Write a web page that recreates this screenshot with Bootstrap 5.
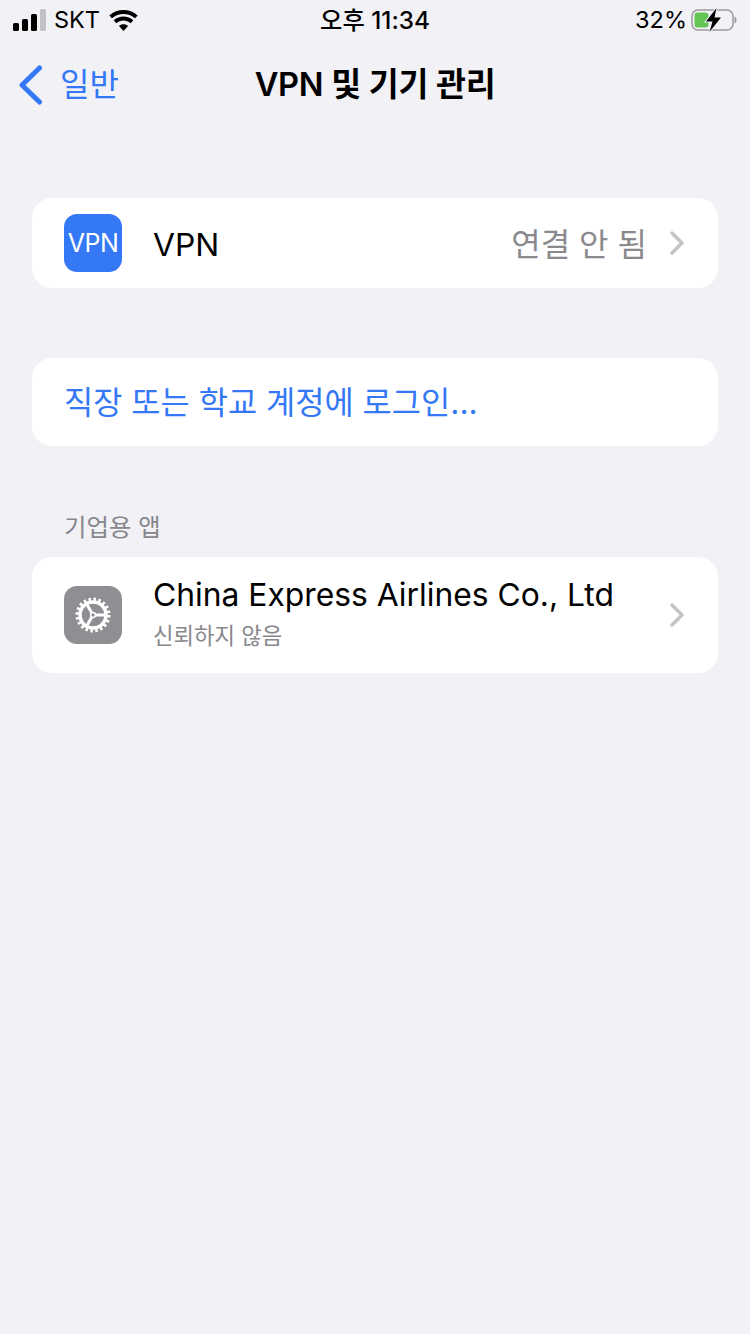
<!DOCTYPE html>
<html lang="ko">
<head>
    <meta charset="UTF-8">
    <title>VPN 및 기기 관리</title>
    <link rel="stylesheet" href="https://cdn.jsdelivr.net/npm/bootstrap@5.3.0/dist/css/bootstrap.min.css">
    <style>
        html, body { height: 100%; }
        body { background: #f1f1f6; color: #000; font-family: Inter, "Noto Sans CJK KR", sans-serif; width: 750px; height: 1334px; overflow: hidden; }
        .status-row { height: 40px; padding: 0 13px; font-size: 23.5px; line-height: 40px; }
        .status-side { width: 260px; }
        .status-time { font-size: 24.3px; font-weight: 500; }
        .title-row { height: 88px; padding: 1px 18px 0; }
        .back-link { color: #3478f6; font-size: 32px; width: 200px; text-decoration: none; }
        .back-link span { margin-left: 1px; }
        .title-spacer { width: 200px; }
        .page-title { font-size: 32.6px; font-weight: 600; letter-spacing: -.3px; }
        .group-box { background: #fff; border-radius: 20px; margin: 0 32px; padding: 0 32px; }
        .row-vpn { height: 90px; margin-top: 70px; }
        .row-login { height: 88px; margin-top: 70px; color: #3478f6; font-size: 31.75px; padding-top: 2px; }
        .row-app { height: 116px; }
        .section-label { color: #87878c; font-size: 24.4px; line-height: 30px; margin: 66px 64px 15px; }
        .app-tile { width: 58px; height: 58px; border-radius: 13px; flex: none; margin-right: 31px; }
        .tile-blue { background: #3478f6; color: #fff; font-size: 25px; letter-spacing: -.5px; padding-top: 2px; }
        .tile-gray { background: #8e8e93; }
        .wifi-icon { margin-left: 1px; }
        .row-name { font-size: 31.8px; line-height: 40px; }
        .row-vpn .row-name, .row-vpn .row-value { padding-top: 3px; }
        .app-text { padding-bottom: 5px; }
        .row-sub { color: #87878c; font-size: 22.3px; line-height: 28px; margin-top: 7px; }
        .row-value { color: #8a8a8e; font-size: 32px; margin-right: 22px; }
        .chevron-icon { margin-right: 1px; }
    </style>
</head>
<body>
    <div class="status-row d-flex justify-content-between align-items-center">
        <div class="status-side d-flex align-items-center gap-2">
            <svg width="33" height="22" viewBox="0 0 33 22"><rect x="0" y="14" width="6" height="8" rx="1.500"/><rect x="9" y="10" width="6" height="12" rx="1.500"/><rect x="18" y="5" width="6" height="17" rx="1.500"/><rect x="27" y="0" width="6" height="22" rx="1.500" fill="#c2c2c6"/></svg>
            <span>SKT</span>
            <svg class="wifi-icon" width="29" height="21" viewBox="0 0 31 23"><path d="M15.500 23l-5-5.600c2.800-2.400 7.200-2.400 10 0z"/><path d="M7.700 14.400l-2.900-3.200c6.100-5.300 15.300-5.300 21.400 0l-2.900 3.200c-4.500-3.800-11.100-3.800-15.600 0z"/><path d="M2.800 9L0 5.900c8.900-7.800 22.100-7.800 31 0L28.200 9C20.900 2.700 10.100 2.700 2.800 9z"/></svg>
        </div>
        <div class="status-time">오후 11:34</div>
        <div class="status-side d-flex align-items-center justify-content-end gap-1">
            <span>32%</span>
            <svg width="46" height="24" viewBox="0 0 46 24"><rect x="1" y="2" width="41" height="20" rx="6" fill="none" stroke="#9a9a9e" stroke-width="1.500"/><rect x="3.500" y="4.500" width="14" height="15" rx="3" fill="#62c554"/><path d="M43.500 8.500v7c1.300-.5 2-2 2-3.500s-.7-3-2-3.500z" fill="#9a9a9e"/><path d="M25.500 0L15 13.500h6.500L18.500 24 30 9.500h-6.500z" stroke="#f1f1f6" stroke-width="2" paint-order="stroke"/></svg>
        </div>
    </div>

    <div class="title-row d-flex align-items-center">
        <a class="back-link d-flex align-items-center gap-3" href="#">
            <svg width="25" height="40" viewBox="0 0 25 40"><path d="M21.500 3L4 20l17.500 17" fill="none" stroke="#3478f6" stroke-width="5" stroke-linecap="round" stroke-linejoin="round"/></svg>
            <span>일반</span>
        </a>
        <div class="page-title flex-grow-1 text-center">VPN 및 기기 관리</div>
        <div class="title-spacer"></div>
    </div>

    <div class="group-box row-vpn d-flex align-items-center">
        <div class="app-tile tile-blue d-flex align-items-center justify-content-center">VPN</div>
        <div class="row-name flex-grow-1">VPN</div>
        <div class="row-value">연결 안 됨</div>
        <svg class="chevron-icon" width="16" height="26" viewBox="0 0 16 26"><path d="M3 3l10 10L3 23" fill="none" stroke="#c4c4c8" stroke-width="3.500" stroke-linecap="round" stroke-linejoin="round"/></svg>
    </div>

    <div class="group-box row-login d-flex align-items-center">직장 또는 학교 계정에 로그인...</div>

    <div class="section-label">기업용 앱</div>

    <div class="group-box row-app d-flex align-items-center">
        <div class="app-tile tile-gray d-flex align-items-center justify-content-center">
            <svg width="36" height="36" viewBox="0 0 36 36" fill="none" stroke="#fff"><circle cx="18" cy="18" r="13" stroke-width="3.500"/><circle cx="18" cy="18" r="15.800" stroke-width="3.400" stroke-dasharray="2.500 2.460"/><path d="M18 18L31 18M18 18L11.500 6.700M18 18L11.500 29.300" stroke-width="3"/><circle cx="18" cy="18" r="2.400" fill="#8e8e93" stroke-width="1.500"/></svg>
        </div>
        <div class="app-text flex-grow-1">
            <div class="row-name">China Express Airlines Co., Ltd</div>
            <div class="row-sub">신뢰하지 않음</div>
        </div>
        <svg class="chevron-icon" width="16" height="26" viewBox="0 0 16 26"><path d="M3 3l10 10L3 23" fill="none" stroke="#c4c4c8" stroke-width="3.500" stroke-linecap="round" stroke-linejoin="round"/></svg>
    </div>

    <script src="https://cdn.jsdelivr.net/npm/bootstrap@5.3.0/dist/js/bootstrap.bundle.min.js"></script>
</body>
</html>
